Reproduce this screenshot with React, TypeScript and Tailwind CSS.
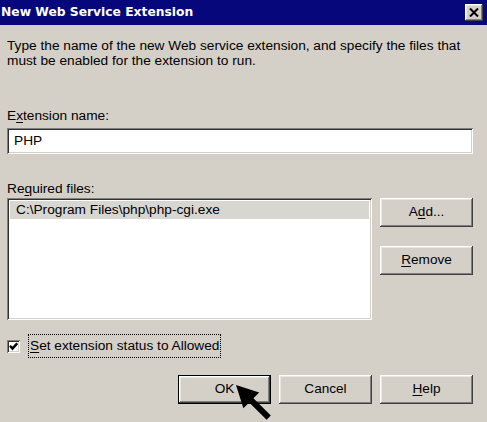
import React from "react";

const raised =
  "shadow-[inset_-1px_-1px_#404040,inset_1px_1px_#ffffff,inset_-2px_-2px_#808080,inset_2px_2px_#e8e6e0]";
const sunken =
  "shadow-[inset_1px_1px_#808080,inset_-1px_-1px_#ffffff,inset_2px_2px_#303030,inset_-2px_-2px_#d4d0c8]";

function Btn({ children, def }: { children: React.ReactNode; def?: boolean }) {
  return (
    <div
      className={
        "w-[93px] h-[29px] bg-[#d4d0c8] flex items-center justify-center text-[13.6px] text-black " +
        (def ? "border border-black " : "") +
        raised
      }
    >
      {children}
    </div>
  );
}

export default function App() {
  return (
    <div
      className="relative w-[487px] h-[422px] overflow-hidden bg-[#d4d0c8] text-black"
      style={{ fontFamily: '"Liberation Sans", Arial, sans-serif' }}
    >
      {/* Title bar */}
      <div className="h-[25px] bg-[#07077c] flex items-center justify-between pr-[4px]">
        <span
          className="text-white font-bold text-[12.3px] leading-none pl-[1px]"
          style={{ fontFamily: '"DejaVu Sans", Verdana, sans-serif' }}
        >
          New Web Service Extension
        </span>
        <div
          className={
            "w-[18px] h-[17px] bg-[#d4d0c8] flex items-center justify-center " + raised
          }
        >
          <svg width="10" height="9" viewBox="0 0 10 9">
            <path d="M1 0.5 L9 8.5 M9 0.5 L1 8.5" stroke="#000" strokeWidth="2" />
          </svg>
        </div>
      </div>

      {/* Body */}
      <div className="pl-[7px] pr-[14px] pt-[13px] text-[13.7px]">
        <p className="leading-[15px]">
          Type the name of the new Web service extension, and specify the files that
          <br />
          must be enabled for the extension to run.
        </p>

        <div className="mt-[40px] leading-[15px]">
          E<span className="underline underline-offset-2">x</span>tension name:
        </div>
        <div
          className={
            "mt-[5px] h-[26px] bg-white flex items-center pl-[7px] " + sunken
          }
        >
          PHP
        </div>

        <div className="mt-[27px] leading-[15px]">
          Re<span className="underline underline-offset-2">q</span>uired files:
        </div>

        <div className="mt-[2px] flex gap-[8px]">
          <div className={"w-[365px] h-[122px] bg-white p-[3px] " + sunken}>
            <div className="h-[18px] bg-[#d8d6d0] flex items-center pl-[6px]">
              C:\Program Files\php\php-cgi.exe
            </div>
          </div>
          <div className="flex flex-col gap-[19px]">
            <Btn>
              A<span className="underline underline-offset-2">d</span>d...
            </Btn>
            <Btn>
              <span className="underline underline-offset-2">R</span>emove
            </Btn>
          </div>
        </div>

        <div className="mt-[14px] flex items-center gap-[8px]">
          <div
            className={
              "w-[13px] h-[13px] bg-white flex items-center justify-center " + sunken
            }
          >
            <svg width="9" height="9" viewBox="0 0 9 9">
              <path d="M1 3.8 L3.5 6.6 L8.2 1.4" stroke="#000" strokeWidth="2.4" fill="none" />
            </svg>
          </div>
          <div className="border border-dotted border-black h-[24px] px-[1px] flex items-center">
            <span>
              <span className="underline underline-offset-2">S</span>et extension status to
              Allowed
            </span>
          </div>
        </div>

        <div className="mt-[17px] flex justify-end gap-[8px]">
          <Btn def>OK</Btn>
          <Btn>Cancel</Btn>
          <Btn>
            <span className="underline underline-offset-2">H</span>elp
          </Btn>
        </div>
      </div>

      {/* Mouse arrow overlay */}
      <svg
        className="absolute left-[236px] top-[385px]"
        width="38"
        height="38"
        viewBox="0 0 36 36"
      >
        <polygon
          points="0,0 22,7 16.5,12.5 33,29 29,33 12.5,16.5 7,22"
          fill="#000"
        />
      </svg>
    </div>
  );
}
